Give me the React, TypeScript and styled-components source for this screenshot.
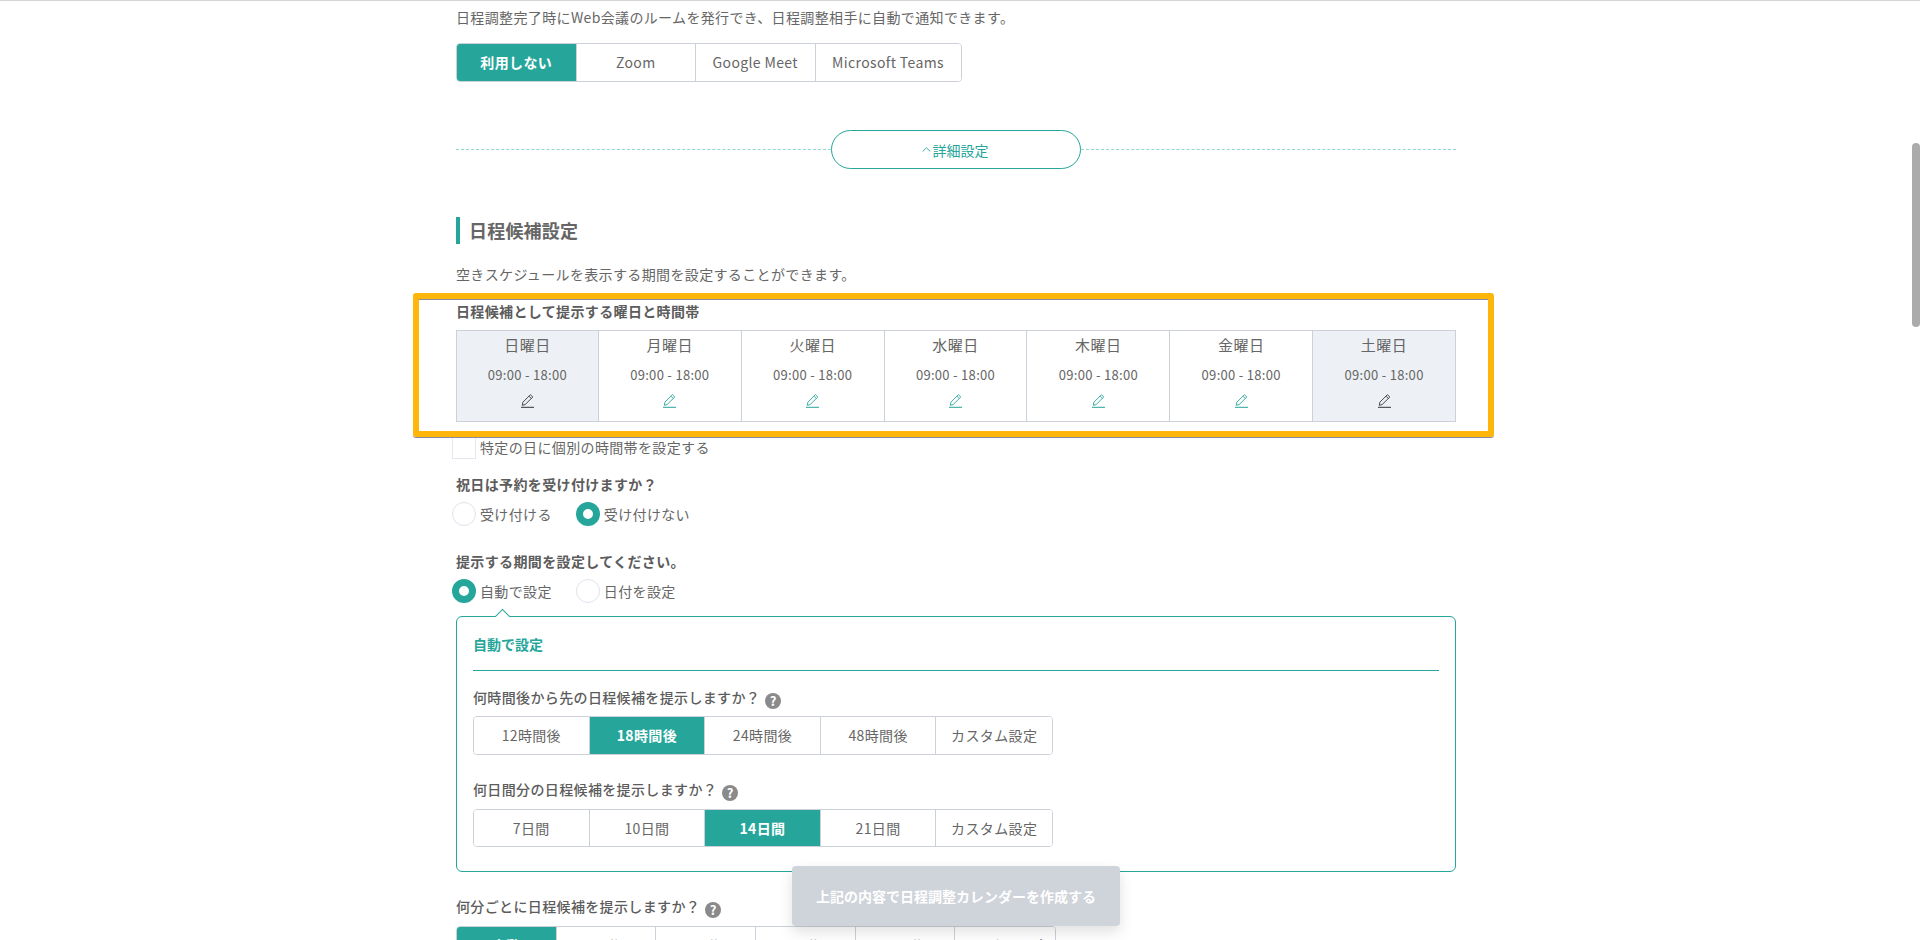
import styled, { createGlobalStyle } from 'styled-components';

const TEAL = '#26a69a';
const LINE = '#ccd1d9';

const GlobalStyle = createGlobalStyle`
	html, body {
		margin: 0;
		padding: 0;
		height: 940px;
		overflow: hidden;
		background: #fff;
	}
	body {
		font-family: 'Noto Sans CJK JP', 'Noto Sans', sans-serif;
		font-size: 14px;
		color: #666;
	}
	* {
		box-sizing: border-box;
	}
`;

const Page = styled.div`
	height: 940px;
	overflow: hidden;
	border-top: 1px solid #d4d4d4;
	position: relative;
`;

const Main = styled.main`
	width: 1000px;
	margin-left: 456px;
`;

const Lead = styled.p<{ $top: number }>`
	margin: ${(p) => p.$top}px 0 0;
	font-size: 14px;
	line-height: 20px;
	letter-spacing: 0.36px;
`;

const Segments = styled.div<{ $top: number }>`
	display: flex;
	width: max-content;
	height: 38.5px;
	margin-top: ${(p) => p.$top}px;
	border: 1px solid ${LINE};
	border-radius: 4px;
	overflow: hidden;
`;

const Segment = styled.div<{ $active?: boolean; $cell: number }>`
	flex: 0 0 ${(p) => p.$cell}px;
	display: flex;
	align-items: center;
	justify-content: center;
	font-size: 14px;
	letter-spacing: 0.36px;
	white-space: nowrap;
	font-weight: ${(p) => (p.$active ? 700 : 400)};
	color: ${(p) => (p.$active ? '#fff' : '#666')};
	background: ${(p) => (p.$active ? TEAL : '#fff')};
	border-right: 1px solid ${LINE};
	&:last-child {
		border-right: 0;
	}
`;

const DetailRow = styled.div`
	display: flex;
	align-items: center;
	justify-content: center;
	height: 39px;
	margin-top: 48.5px;
	&::before,
	&::after {
		content: '';
		flex: 1;
		border-top: 1px dashed #93d8cf;
	}
`;

const DetailButton = styled.button`
	width: 250px;
	height: 39px;
	border: 1px solid ${TEAL};
	border-radius: 20px;
	background: #fff;
	color: ${TEAL};
	font: inherit;
	font-size: 14px;
	display: flex;
	align-items: center;
	justify-content: center;
	gap: 2px;
	padding: 0 2px 0 0;
`;

const Heading = styled.h2`
	margin: 48px 0 0;
	height: 27px;
	padding-left: 9px;
	border-left: 4px solid ${TEAL};
	font-size: 18px;
	line-height: 27px;
	font-weight: 700;
	letter-spacing: 0.2px;
	color: #666;
`;

const Label = styled.div<{ $top: number }>`
	margin-top: ${(p) => p.$top}px;
	font-size: 14px;
	line-height: 20px;
	font-weight: 700;
	color: #5c5c5c;
	letter-spacing: 0.36px;
`;

const WeekTable = styled.div`
	display: grid;
	grid-template-columns: repeat(7, 1fr);
	height: 92px;
	margin-top: 9px;
`;

const DayCell = styled.div<{ $off?: boolean }>`
	display: flex;
	flex-direction: column;
	align-items: center;
	padding-top: 3px;
	border: 1px solid ${LINE};
	border-left: 0;
	background: ${(p) => (p.$off ? '#edf1f5' : '#fff')};
	&:first-child {
		border-left: 1px solid ${LINE};
	}
`;

const DayName = styled.div`
	font-size: 15px;
	line-height: 22px;
	letter-spacing: 0.5px;
`;

const DayTime = styled.div`
	margin-top: 9px;
	font-size: 13px;
	line-height: 20px;
	letter-spacing: 0.3px;
`;

const EditIcon = styled.svg<{ $off?: boolean }>`
	display: block;
	margin-top: 9px;
	width: 13px;
	height: 14px;
	color: ${(p) => (p.$off ? '#333' : TEAL)};
`;

const CheckRow = styled.label`
	display: flex;
	align-items: center;
	gap: 4px;
	height: 24px;
	margin: 13px 0 0 -4px;
	letter-spacing: 0.36px;
`;

const CheckBox = styled.span`
	width: 24px;
	height: 24px;
	border: 1px solid #e2e8ee;
	background: #fff;
`;

const RadioRow = styled.div`
	display: flex;
	gap: 24px;
	height: 24px;
	margin: 8px 0 0 -4px;
`;

const Radio = styled.label`
	display: flex;
	align-items: center;
	gap: 4px;
	letter-spacing: 0.36px;
`;

const RadioMark = styled.span<{ $on?: boolean }>`
	width: 24px;
	height: 24px;
	border-radius: 50%;
	background: #fff;
	border: ${(p) => (p.$on ? `7px solid ${TEAL}` : '1px solid #dde4ec')};
`;

const AutoPanel = styled.section`
	position: relative;
	height: 256px;
	margin-top: 13px;
	padding: 0 13px 0 16px;
	border: 1px solid ${TEAL};
	border-radius: 6px;
	&::before {
		content: '';
		position: absolute;
		top: -6px;
		left: 40px;
		width: 10px;
		height: 10px;
		background: #fff;
		border-top: 1px solid ${TEAL};
		border-left: 1px solid ${TEAL};
		transform: rotate(45deg);
	}
`;

const PanelTitle = styled.div`
	height: 54px;
	margin-right: 3px;
	padding-top: 17px;
	border-bottom: 1px solid ${TEAL};
	font-weight: 700;
	font-size: 14px;
	line-height: 20px;
	color: ${TEAL};
`;

const Question = styled.div<{ $top: number }>`
	display: flex;
	align-items: center;
	gap: 5px;
	height: 20px;
	margin-top: ${(p) => p.$top}px;
	font-weight: 500;
	letter-spacing: 0.36px;
	color: #5c5c5c;
`;

const Help = styled.span`
	width: 16px;
	height: 16px;
	margin-top: 7px;
	border-radius: 50%;
	background: #8a8a8a;
	color: #fff;
	font-size: 13px;
	line-height: 16px;
	font-weight: 700;
	text-align: center;
	letter-spacing: 0;
`;

const SubmitButton = styled.button`
	position: absolute;
	top: 865px;
	left: 792px;
	width: 328px;
	height: 60px;
	border: 0;
	border-radius: 4px;
	background: #cfd3da;
	box-shadow: 0 6px 14px rgba(0, 0, 0, 0.12);
	color: #fff;
	font: inherit;
	font-weight: 700;
	font-size: 14px;
`;

const ScrollThumb = styled.div`
	position: absolute;
	top: 142px;
	right: 0;
	width: 8px;
	height: 184px;
	border-radius: 4px;
	background: #ababab;
`;

const Highlight = styled.div`
	position: absolute;
	top: 292px;
	left: 413px;
	width: 1081px;
	height: 144px;
	border: 6px solid #ffb60a;
	border-radius: 3px;
	box-shadow: 0 1px 0 #8c8c99, inset 0 1px 0 #8c8c99;
`;

const WEEK = [
	{ name: '日曜日', off: true },
	{ name: '月曜日' },
	{ name: '火曜日' },
	{ name: '水曜日' },
	{ name: '木曜日' },
	{ name: '金曜日' },
	{ name: '土曜日', off: true },
];

const Pencil = ({ off }: { off?: boolean }) => (
	<EditIcon $off={off} viewBox="0 0 13 14" fill="none" stroke="currentColor" strokeWidth="0.9">
		<path d="M9.4 0.7 L11.8 3 L4.1 10.6 L1.3 11.3 L1.9 8.2 Z" />
		<path d="M8 2.2 L10.3 4.5" />
		<path d="M0 13.3 H13" strokeWidth="1" />
	</EditIcon>
);

const ChevronUp = () => (
	<svg width="9" height="5" viewBox="0 0 9 5" fill="none" stroke="currentColor" strokeWidth="0.9">
		<path d="M0.6 4.6 L4.5 0.8 L8.4 4.6" />
	</svg>
);

const App = () => {
	return (
		<Page>
			<GlobalStyle />
			<Main>
				<Lead $top={6}>日程調整完了時にWeb会議のルームを発行でき、日程調整相手に自動で通知できます。</Lead>
				<Segments $top={16}>
					<Segment $cell={119.5} $active>利用しない</Segment>
					<Segment $cell={119.5}>Zoom</Segment>
					<Segment $cell={119.5}>Google Meet</Segment>
					<Segment $cell={145}>Microsoft Teams</Segment>
				</Segments>

				<DetailRow>
					<DetailButton><ChevronUp />詳細設定</DetailButton>
				</DetailRow>

				<Heading>日程候補設定</Heading>
				<Lead $top={20}>空きスケジュールを表示する期間を設定することができます。</Lead>

				<Label $top={17}>日程候補として提示する曜日と時間帯</Label>
				<WeekTable>
					{WEEK.map((d) => (
						<DayCell key={d.name} $off={d.off}>
							<DayName>{d.name}</DayName>
							<DayTime>09:00 - 18:00</DayTime>
							<Pencil off={d.off} />
						</DayCell>
					))}
				</WeekTable>

				<CheckRow><CheckBox />特定の日に個別の時間帯を設定する</CheckRow>

				<Label $top={15}>祝日は予約を受け付けますか？</Label>
				<RadioRow>
					<Radio><RadioMark />受け付ける</Radio>
					<Radio><RadioMark $on />受け付けない</Radio>
				</RadioRow>

				<Label $top={25}>提示する期間を設定してください。</Label>
				<RadioRow>
					<Radio><RadioMark $on />自動で設定</Radio>
					<Radio><RadioMark />日付を設定</Radio>
				</RadioRow>

				<AutoPanel>
					<PanelTitle>自動で設定</PanelTitle>
					<Question $top={16}>何時間後から先の日程候補を提示しますか？<Help>?</Help></Question>
					<Segments $top={9}>
						<Segment $cell={115.6}>12時間後</Segment>
						<Segment $cell={115.6} $active>18時間後</Segment>
						<Segment $cell={115.6}>24時間後</Segment>
						<Segment $cell={115.6}>48時間後</Segment>
						<Segment $cell={115.6}>カスタム設定</Segment>
					</Segments>
					<Question $top={24.5}>何日間分の日程候補を提示しますか？<Help>?</Help></Question>
					<Segments $top={9.5}>
						<Segment $cell={115.6}>7日間</Segment>
						<Segment $cell={115.6}>10日間</Segment>
						<Segment $cell={115.6} $active>14日間</Segment>
						<Segment $cell={115.6}>21日間</Segment>
						<Segment $cell={115.6}>カスタム設定</Segment>
					</Segments>
				</AutoPanel>

				<Question $top={24}>何分ごとに日程候補を提示しますか？<Help>?</Help></Question>
				<Segments $top={9.5}>
					<Segment $cell={99.7} $active>自動</Segment>
					<Segment $cell={99.7}>15分</Segment>
					<Segment $cell={99.7}>30分</Segment>
					<Segment $cell={99.7}>60分</Segment>
					<Segment $cell={99.7}>120分</Segment>
					<Segment $cell={99.7}>カスタム設定</Segment>
				</Segments>
			</Main>

			<Highlight />
			<SubmitButton>上記の内容で日程調整カレンダーを作成する</SubmitButton>
			<ScrollThumb />
		</Page>
	);
};

export default App;
